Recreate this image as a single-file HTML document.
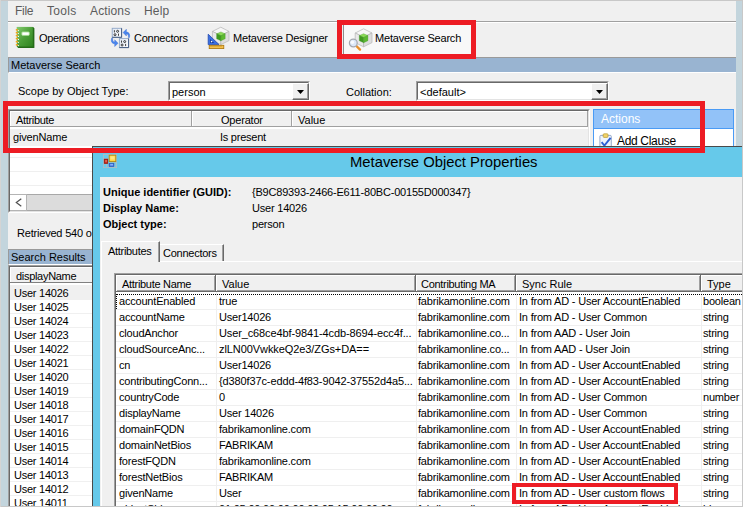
<!DOCTYPE html>
<html lang="en">
<head>
<meta charset="utf-8">
<title>Metaverse Search</title>
<style>
html,body{margin:0;padding:0}
body{width:743px;height:507px;overflow:hidden;position:relative;background:#f0f0f0;font-family:"Liberation Sans",sans-serif;font-size:11px;color:#000}
div,span,i,b{position:absolute;white-space:nowrap;box-sizing:border-box}
svg{position:absolute;overflow:visible}
.t{line-height:14px;height:14px}
/* window frame */
.fl{left:0;top:0;width:8px;height:507px;background:#c3d5dd}
.fr{left:736px;top:0;width:7px;height:507px;background:#c3d5dd}
.bl{left:0;top:0;width:1px;height:507px;background:#d4d4d4}
.br{left:742px;top:0;width:1px;height:507px;background:#c8c8c8}
.ft{left:0;top:0;width:743px;height:1px;background:#c8c8c8}
.fb{left:0;top:506px;width:743px;height:1px;background:#c8c8c8}
/* menu */
.menu{left:8px;top:1px;width:728px;height:20px;background:#f0f0f0}
.menu span{top:2px;font-size:12px;line-height:16px;color:#5c5c5c;letter-spacing:-0.3px}
.msep{left:8px;top:21px;width:728px;height:1px;background:#a0a0a0}
.msep2{left:8px;top:22px;width:728px;height:1px;background:#fff}
/* toolbar */
.tbt{top:31px;line-height:14px;font-size:11px}
.tbsel{left:343px;top:25px;width:128px;height:29px;background:#f8f8f8;border-left:1px solid #8c8c8c}
.hdr{background:#99b4d1;height:16px;line-height:14px;font-size:11px;padding-left:2px;border-top:1px solid #9a9a9a;border-left:1px solid #9a9a9a;border-bottom:1px solid #fff}
/* combos */
.combo{height:20px;background:#fff;border:1px solid #a0a0a0;border-right-color:#fff;border-bottom-color:#fff}
.combo i{position:absolute;left:0;top:0;right:0;bottom:0;border:1px solid #696969;border-right-color:#e3e3e3;border-bottom-color:#e3e3e3}
.combo span{left:3px;top:3px;line-height:14px}
.combo b{position:absolute;right:0;top:1px;width:17px;height:17px;background:#f0f0f0;border:1px solid #fff;border-right-color:#696969;border-bottom-color:#696969;box-shadow:inset -1px -1px 0 #a0a0a0}
.combo b:after{content:"";position:absolute;left:4px;top:6px;width:7px;height:4px;background:#000;clip-path:polygon(0 0,100% 0,50% 100%)}
/* listview */
.lv{background:#fff;border:1px solid #a0a0a0;border-right-color:#fff;border-bottom-color:#fff}
.lv i{position:absolute;left:0;top:0;right:0;bottom:0;border:1px solid #696969;border-right-color:#e3e3e3;border-bottom-color:#e3e3e3}
.lvh{background:#f0f0f0;height:16px;border-bottom:1px solid #a0a0a0;border-right:1px solid #a0a0a0;box-shadow:inset 1px 1px 0 #fff}
.lvh span{top:2px;line-height:14px}
.lvh2{height:17px;border-bottom-color:#696969;border-right-color:#696969;box-shadow:inset 1px 1px 0 #fff,inset -1px -1px 0 #a0a0a0}
.gl{height:1px;background:#efefef}
/* results */
.reslist{left:10px;top:284px;width:84px;height:223px;background:#fff;overflow:hidden}
.rrow{left:0;width:84px;height:14px;border-bottom:1px solid #f0f0f0}
.rrow span{left:4px;top:0;line-height:14px;letter-spacing:-0.25px}
/* dialog */
.dlg{left:92px;top:146px;width:660px;height:370px;background:#66c9ea;border:1px solid #4a4a4a}
.dbody{left:100px;top:177px;width:650px;height:340px;background:#f0f0f0}
.dtitle{left:350px;top:152px;font-size:14.8px;line-height:20px;color:#000}
.lab{font-weight:bold;left:103px;line-height:14px}
.val{left:252px;line-height:14px;letter-spacing:-0.2px}
.trow{left:116px;width:640px;height:16px;border-bottom:1px solid #efefef;letter-spacing:-0.2px}
.trow span{top:0;line-height:14px}
.c1{left:3px}.c2{left:103px}.c3{left:302px}.c4{left:403px}.c5{left:587px}
.vg{top:292px;width:1px;height:215px;background:#efefef}
.red{border:5px solid #ed1c24}
</style>
</head>
<body>
<div class="fl"></div><div class="fr"></div>
<div class="menu"><span style="left:7px">File</span><span style="left:39px;letter-spacing:0.3px">Tools</span><span style="left:82px;letter-spacing:0.13px">Actions</span><span style="left:136px;letter-spacing:0.2px">Help</span></div>
<div class="msep"></div><div class="msep2"></div>
<div class="tbsel"></div>
<!-- operations notebook -->
<svg style="left:15px;top:26px" width="20" height="23" viewBox="0 0 20 23">
<defs><linearGradient id="gnb" x1="0" y1="0" x2="1" y2="1"><stop offset="0" stop-color="#84cc70"/><stop offset="0.5" stop-color="#4c9f39"/><stop offset="1" stop-color="#2f8420"/></linearGradient></defs>
<path d="M1.9 0.9H18.1L19.4 2.2V22H3.2L1.9 20.6Z" fill="#256c18"/>
<rect x="1.9" y="0.9" width="15.9" height="19.6" fill="url(#gnb)"/>
<rect x="6.8" y="5.9" width="7.5" height="3.5" rx="0.8" fill="#fff" stroke="#9bd688" stroke-width="0.9"/>
<g fill="#f3a51a"><ellipse cx="1.9" cy="3.8" rx="1.3" ry="0.9"/><ellipse cx="1.9" cy="6.7" rx="1.3" ry="0.9"/><ellipse cx="1.9" cy="9.6" rx="1.3" ry="0.9"/><ellipse cx="1.9" cy="12.6" rx="1.3" ry="0.9"/><ellipse cx="1.9" cy="15.7" rx="1.3" ry="0.9"/><ellipse cx="1.9" cy="18.8" rx="1.3" ry="0.9"/></g>
<g fill="#fff"><circle cx="3.4" cy="4.6" r="0.6"/><circle cx="3.4" cy="7.5" r="0.6"/><circle cx="3.4" cy="10.4" r="0.6"/><circle cx="3.4" cy="13.4" r="0.6"/><circle cx="3.4" cy="16.5" r="0.6"/><circle cx="3.4" cy="19.6" r="0.6"/></g>
</svg>
<!-- connectors -->
<svg style="left:110px;top:27px" width="21" height="22" viewBox="0 0 21 22">
<defs><linearGradient id="gbx" x1="0" y1="0" x2="1" y2="1"><stop offset="0" stop-color="#dfe7f2"/><stop offset="1" stop-color="#fdfdfe"/></linearGradient></defs>
<rect x="2.2" y="1.3" width="9.4" height="9" fill="url(#gbx)" stroke="#90a6c8" stroke-width="0.9"/>
<path d="M11.6 1.3V10.3H2.2" fill="none" stroke="#3c5378" stroke-width="0.9"/>
<rect x="9.4" y="11.6" width="9.2" height="9" fill="url(#gbx)" stroke="#90a6c8" stroke-width="0.9"/>
<path d="M18.6 11.6V20.6H9.4" fill="none" stroke="#3c5378" stroke-width="0.9"/>
<g fill="none" stroke="#111" stroke-width="0.8"><path d="M4.4 3.2v2.2M8.5 6.6v2.2"/><circle cx="7.6" cy="4.3" r="1"/><circle cx="5" cy="7.7" r="1"/><path d="M11.5 13.5v2.2M15.6 16.9v2.2"/><circle cx="14.7" cy="14.6" r="1"/><circle cx="12.1" cy="18" r="1"/></g>
<path d="M19.5 10.6C20.4 6.8 18.6 5 16.4 5V2.2L13 5.6L16.4 9V6.9C17.9 6.9 18.8 8.2 18.3 10.6Z" fill="#4a86ee" stroke="#2f60c8" stroke-width="0.35"/>
<path d="M1.5 11.2C0.6 15 2.4 16.8 4.7 16.8V19.6L8.1 16.2L4.7 12.8V14.9C3.2 14.9 2.3 13.6 2.8 11.2Z" fill="#4a86ee" stroke="#2f60c8" stroke-width="0.35"/>
</svg>
<!-- metaverse designer -->
<svg style="left:207px;top:26px" width="23" height="24" viewBox="0 0 23 24">
<g stroke="#b4b4b4" stroke-width="0.7" stroke-linejoin="round">
<path d="M13.8 1.2L22 5.4L13.8 9.6L5.4 5.4Z" fill="#f7f7f7"/>
<path d="M5.4 5.4L13.8 9.6V18.6L5.4 14.6Z" fill="#e9e9e9"/>
<path d="M13.8 9.6L22 5.4V14.6L13.8 18.6Z" fill="#dedede"/>
</g>
<path d="M13.9 5.9L18.2 7.8L13.9 9.8L9.6 7.8Z" fill="#8ada56" stroke="#3a8a20" stroke-width="0.3"/>
<path d="M9.6 7.8L13.9 9.8V14.8L9.6 12.8Z" fill="#3f9a20" stroke="#3a8a20" stroke-width="0.3"/>
<path d="M13.9 9.8L18.2 7.8V12.8L13.9 14.8Z" fill="#5cba30" stroke="#3a8a20" stroke-width="0.3"/>
<path d="M1.2 8.2V18.6H12Z" fill="#3a6fe2" stroke="#2148b0" stroke-width="0.8" stroke-linejoin="round"/>
<path d="M3.2 13V16.9H7.2Z" fill="#1a3a96"/><circle cx="4.6" cy="15.6" r="0.8" fill="#fff"/>
<rect x="2.2" y="19.3" width="14.6" height="3.3" fill="#f4c04c" stroke="#a8740c" stroke-width="0.8"/>
<path d="M4 19.6v1.4M6 19.6v1.4M8 19.6v1.4M10 19.6v1.4M12 19.6v1.4M14 19.6v1.4" stroke="#c08818" stroke-width="0.7"/>
</svg>
<!-- metaverse search -->
<svg style="left:348px;top:26.6px" width="25" height="25" viewBox="0 0 25 25">
<g stroke="#b4b4b4" stroke-width="0.7" stroke-linejoin="round">
<path d="M15.6 1.8L24 6L15.6 10.2L7.2 6Z" fill="#f7f7f7"/>
<path d="M7.2 6L15.6 10.2V19.8L7.2 15.6Z" fill="#e9e9e9"/>
<path d="M15.6 10.2L24 6V15.6L15.6 19.8Z" fill="#dedede"/>
</g>
<path d="M15.6 6.7L19.9 8.6L15.6 10.6L11.3 8.6Z" fill="#8ada56" stroke="#3a8a20" stroke-width="0.3"/>
<path d="M11.3 8.6L15.6 10.6V15.7L11.3 13.7Z" fill="#3f9a20" stroke="#3a8a20" stroke-width="0.3"/>
<path d="M15.6 10.6L19.9 8.6V13.7L15.6 15.7Z" fill="#5cba30" stroke="#3a8a20" stroke-width="0.3"/>
<path d="M8.4 19L12 22.6" stroke="#e8902a" stroke-width="2.4" stroke-linecap="round"/>
<circle cx="5.3" cy="16" r="3.9" fill="#dce8f8" stroke="#a4a8b0" stroke-width="1.2"/>
<circle cx="4.4" cy="15.2" r="1.8" fill="#fff" opacity="0.8"/>
</svg>

<span class="tbt" style="left:39px;letter-spacing:-0.35px">Operations</span>
<span class="tbt" style="left:134px;letter-spacing:-0.25px">Connectors</span>
<span class="tbt" style="left:233px;letter-spacing:-0.2px">Metaverse Designer</span>
<span class="tbt" style="left:375px;letter-spacing:-0.2px">Metaverse Search</span>
<div class="hdr" style="left:8px;top:57px;width:728px">Metaverse Search</div>
<span class="t" style="left:18px;top:84px">Scope by Object Type:</span>
<div class="combo" style="left:168px;top:81px;width:142px"><i></i><span>person</span><b></b></div>
<span class="t" style="left:346px;top:85px">Collation:</span>
<div class="combo" style="left:416px;top:81px;width:193px"><i></i><span>&lt;default&gt;</span><b></b></div>
<!-- clause list -->
<div class="lv" style="left:8px;top:109px;width:582px;height:104px"><i></i></div>
<div class="lvh" style="left:10px;top:111px;width:182px"><span style="left:6px;letter-spacing:-0.33px">Attribute</span></div>
<div class="lvh" style="left:192px;top:111px;width:100px"><span style="left:29px;letter-spacing:-0.2px">Operator</span></div>
<div class="lvh" style="left:292px;top:111px;width:296px"><span style="left:6px">Value</span></div>
<div style="left:10px;top:129px;width:578px;height:17px;background:#f0f0f0"></div>
<span class="t" style="left:13px;top:130px;letter-spacing:-0.15px">givenName</span>
<span class="t" style="left:220px;top:130px;letter-spacing:-0.25px">Is present</span>
<div class="gl" style="left:10px;top:157px;width:578px"></div><div class="gl" style="left:10px;top:171px;width:578px"></div><div class="gl" style="left:10px;top:185px;width:578px"></div>
<!-- actions panel -->
<div style="left:593px;top:109px;width:141px;height:60px;background:#fff;border:1px solid #4a9bf5"></div>
<div style="left:594px;top:110px;width:139px;height:19px;background:#92c2f8;border-bottom:1px solid #4a9bf5"></div>
<span style="left:601px;top:111px;font-size:12px;line-height:16px;color:#fff">Actions</span>
<svg style="left:599px;top:133px" width="14" height="16" viewBox="0 0 14 16">
<rect x="0.9" y="2.4" width="11.4" height="13" rx="1" fill="#eef3fb" stroke="#8aa0c4" stroke-width="0.9"/>
<rect x="4.2" y="0.8" width="4.8" height="3.6" rx="0.8" fill="#f2d36a" stroke="#b89a2c" stroke-width="0.7"/>
<path d="M2.6 9.2L5.4 12.6L11.6 4.8" fill="none" stroke="#2c5fd4" stroke-width="1.9"/>
</svg>
<span style="left:617px;top:133px;font-size:12px;line-height:16px;color:#000;letter-spacing:-0.33px">Add Clause</span>
<!-- scrollbar -->
<div style="left:10px;top:194px;width:90px;height:17px;background:#dcdcdc;border-top:1px solid #a8a8a8;border-bottom:1px solid #a8a8a8"></div>
<div style="left:10px;top:194px;width:17px;height:17px;background:#fff;border:1px solid #b4b4b4;border-left:0"></div>
<svg style="left:15px;top:198px" width="8" height="9" viewBox="0 0 8 9"><path d="M6.3 0.8L1.3 4.5L6.3 8.2" fill="none" stroke="#505050" stroke-width="1.2"/></svg>
<span class="t" style="left:17px;top:226px;letter-spacing:-0.2px">Retrieved 540 o</span>
<div class="hdr" style="left:8px;top:249px;width:90px">Search Results</div>
<div class="lv" style="left:8px;top:265px;width:90px;height:250px"><i></i></div>
<div class="lvh" style="left:10px;top:267px;width:90px;border-bottom-color:#808080"><span style="left:6px;letter-spacing:-0.3px">displayName</span></div>
<div class="reslist">
<div style="left:0;top:1px;width:84px;height:15px;background:#f0f0f0"></div>
<div class="rrow" style="top:2px"><span>User 14026</span></div>
<div class="rrow" style="top:16px"><span>User 14025</span></div>
<div class="rrow" style="top:30px"><span>User 14024</span></div>
<div class="rrow" style="top:44px"><span>User 14023</span></div>
<div class="rrow" style="top:58px"><span>User 14022</span></div>
<div class="rrow" style="top:72px"><span>User 14021</span></div>
<div class="rrow" style="top:86px"><span>User 14020</span></div>
<div class="rrow" style="top:100px"><span>User 14019</span></div>
<div class="rrow" style="top:114px"><span>User 14018</span></div>
<div class="rrow" style="top:128px"><span>User 14017</span></div>
<div class="rrow" style="top:142px"><span>User 14016</span></div>
<div class="rrow" style="top:156px"><span>User 14015</span></div>
<div class="rrow" style="top:170px"><span>User 14014</span></div>
<div class="rrow" style="top:184px"><span>User 14013</span></div>
<div class="rrow" style="top:198px"><span>User 14012</span></div>
<div class="rrow" style="top:212px"><span>User 14011</span></div>
</div>
<div class="dlg"></div>
<div class="dbody"></div>
<svg style="left:103px;top:154px" width="14" height="14" viewBox="0 0 14 14">
<rect x="0.4" y="0.4" width="13.2" height="13.2" fill="#62cdf2" stroke="#b4bcc0" stroke-width="0.8"/>
<path d="M5.2 0.8V4.6M0.8 4.6H5.2M0.8 9.8H5.6M5.6 9.8V13.2M3.5 10V13.2M11.8 8.4V13.2M5.6 8.2H13.2" stroke="#b4bcc0" stroke-width="0.7" fill="none"/>
<rect x="6.2" y="1.2" width="6.6" height="6.4" fill="#ffd646" stroke="#b58a10" stroke-width="0.9"/>
<rect x="7.4" y="2.3" width="4.2" height="3.2" fill="#ffeb9a" opacity="0.7"/>
<rect x="1.2" y="5.1" width="3.6" height="4.4" fill="#c41a0a" stroke="#8e1206" stroke-width="0.6"/>
<rect x="2.3" y="6" width="1.5" height="2.3" fill="#f08a78" opacity="0.8"/>
<rect x="6.1" y="9.4" width="4.8" height="3.2" fill="#3c74e4" stroke="#2a52b0" stroke-width="0.6"/>
<rect x="7.2" y="10" width="2.8" height="1.5" fill="#9cc0ff" opacity="0.8"/>
</svg>
<span class="dtitle">Metaverse Object Properties</span>
<span class="lab" style="top:185px">Unique identifier (GUID):</span>
<span class="lab" style="top:201px">Display Name:</span>
<span class="lab" style="top:217px">Object type:</span>
<span class="val" style="top:185px">{B9C89393-2466-E611-80BC-00155D000347}</span>
<span class="val" style="top:201px">User 14026</span>
<span class="val" style="top:217px">person</span>
<!-- tabs -->
<div style="left:101px;top:261px;width:650px;height:250px;border:1px solid #fff;border-right:0;border-bottom:0"></div>
<div style="left:159px;top:244px;width:65px;height:17px;border:1px solid #fff;border-bottom:0;border-right:1px solid #696969;box-shadow:inset -1px 0 0 #a0a0a0"></div>
<span class="t" style="left:163px;top:246px;letter-spacing:-0.25px">Connectors</span>
<div style="left:101px;top:241px;width:59px;height:21px;background:#f0f0f0;border:1px solid #fff;border-bottom:0;border-right:1px solid #696969;box-shadow:inset -1px 0 0 #a0a0a0"></div>
<span class="t" style="left:108px;top:244px;letter-spacing:-0.3px">Attributes</span>
<!-- table -->
<div class="lv" style="left:114px;top:273px;width:640px;height:240px"><i></i></div>
<div class="lvh lvh2" style="left:116px;top:275px;width:100px"><span style="left:6px;letter-spacing:-0.3px">Attribute Name</span></div>
<div class="lvh lvh2" style="left:216px;top:275px;width:200px"><span style="left:6px">Value</span></div>
<div class="lvh lvh2" style="left:416px;top:275px;width:100px"><span style="left:5px;letter-spacing:-0.3px">Contributing MA</span></div>
<div class="lvh lvh2" style="left:516px;top:275px;width:185px"><span style="left:6px">Sync Rule</span></div>
<div class="lvh lvh2" style="left:701px;top:275px;width:60px"><span style="left:6px">Type</span></div>
<div class="trow" style="top:294px"><span class="c1">accountEnabled</span><span class="c2">true</span><span class="c3">fabrikamonline.com</span><span class="c4">In from AD - User AccountEnabled</span><span class="c5">boolean</span></div>
<div class="trow" style="top:310px"><span class="c1">accountName</span><span class="c2">User14026</span><span class="c3">fabrikamonline.com</span><span class="c4">In from AD - User Common</span><span class="c5">string</span></div>
<div class="trow" style="top:326px"><span class="c1">cloudAnchor</span><span class="c2" style="letter-spacing:-0.12px">User_c68ce4bf-9841-4cdb-8694-ecc4f...</span><span class="c3">fabrikamonline.co...</span><span class="c4">In from AAD - User Join</span><span class="c5">string</span></div>
<div class="trow" style="top:342px"><span class="c1">cloudSourceAnc...</span><span class="c2" style="letter-spacing:-0.08px">zlLN00VwkkeQ2e3/ZGs+DA==</span><span class="c3">fabrikamonline.co...</span><span class="c4">In from AAD - User Join</span><span class="c5">string</span></div>
<div class="trow" style="top:358px"><span class="c1">cn</span><span class="c2">User14026</span><span class="c3">fabrikamonline.com</span><span class="c4">In from AD - User AccountEnabled</span><span class="c5">string</span></div>
<div class="trow" style="top:374px"><span class="c1">contributingConn...</span><span class="c2" style="letter-spacing:-0.12px">{d380f37c-eddd-4f83-9042-37552d4a5...</span><span class="c3">fabrikamonline.com</span><span class="c4">In from AD - User AccountEnabled</span><span class="c5">string</span></div>
<div class="trow" style="top:390px"><span class="c1">countryCode</span><span class="c2">0</span><span class="c3">fabrikamonline.com</span><span class="c4">In from AD - User Common</span><span class="c5">number</span></div>
<div class="trow" style="top:406px"><span class="c1">displayName</span><span class="c2">User 14026</span><span class="c3">fabrikamonline.com</span><span class="c4">In from AD - User Common</span><span class="c5">string</span></div>
<div class="trow" style="top:422px"><span class="c1">domainFQDN</span><span class="c2">fabrikamonline.com</span><span class="c3">fabrikamonline.com</span><span class="c4">In from AD - User AccountEnabled</span><span class="c5">string</span></div>
<div class="trow" style="top:438px"><span class="c1">domainNetBios</span><span class="c2">FABRIKAM</span><span class="c3">fabrikamonline.com</span><span class="c4">In from AD - User AccountEnabled</span><span class="c5">string</span></div>
<div class="trow" style="top:454px"><span class="c1">forestFQDN</span><span class="c2">fabrikamonline.com</span><span class="c3">fabrikamonline.com</span><span class="c4">In from AD - User AccountEnabled</span><span class="c5">string</span></div>
<div class="trow" style="top:470px"><span class="c1">forestNetBios</span><span class="c2">FABRIKAM</span><span class="c3">fabrikamonline.com</span><span class="c4">In from AD - User AccountEnabled</span><span class="c5">string</span></div>
<div class="trow" style="top:486px"><span class="c1">givenName</span><span class="c2">User</span><span class="c3">fabrikamonline.com</span><span class="c4">In from AD - User custom flows</span><span class="c5">string</span></div>
<div class="trow" style="top:502px"><span class="c1">objectSid</span><span class="c2">01 05 00 00 00 00 00 05 15 00 00 00 ...</span><span class="c3">fabrikamonline.com</span><span class="c4">In from AD - User AccountEnabled</span><span class="c5">binary</span></div>

<div class="vg" style="left:216px"></div><div class="vg" style="left:416px"></div><div class="vg" style="left:516px"></div><div class="vg" style="left:701px"></div>
<div style="left:116px;top:294px;width:640px;height:15px;border-top:1px dotted #000;border-left:1px dotted #000"></div>
<div class="red" style="left:337px;top:20px;width:139px;height:39px"></div>
<div class="red" style="left:3px;top:101px;width:702px;height:52px"></div>
<div class="red" style="left:512px;top:483px;width:166px;height:21px;border-width:4px"></div>
<div class="ft"></div><div class="fb"></div><div class="bl"></div><div class="br"></div>
</body>
</html>
